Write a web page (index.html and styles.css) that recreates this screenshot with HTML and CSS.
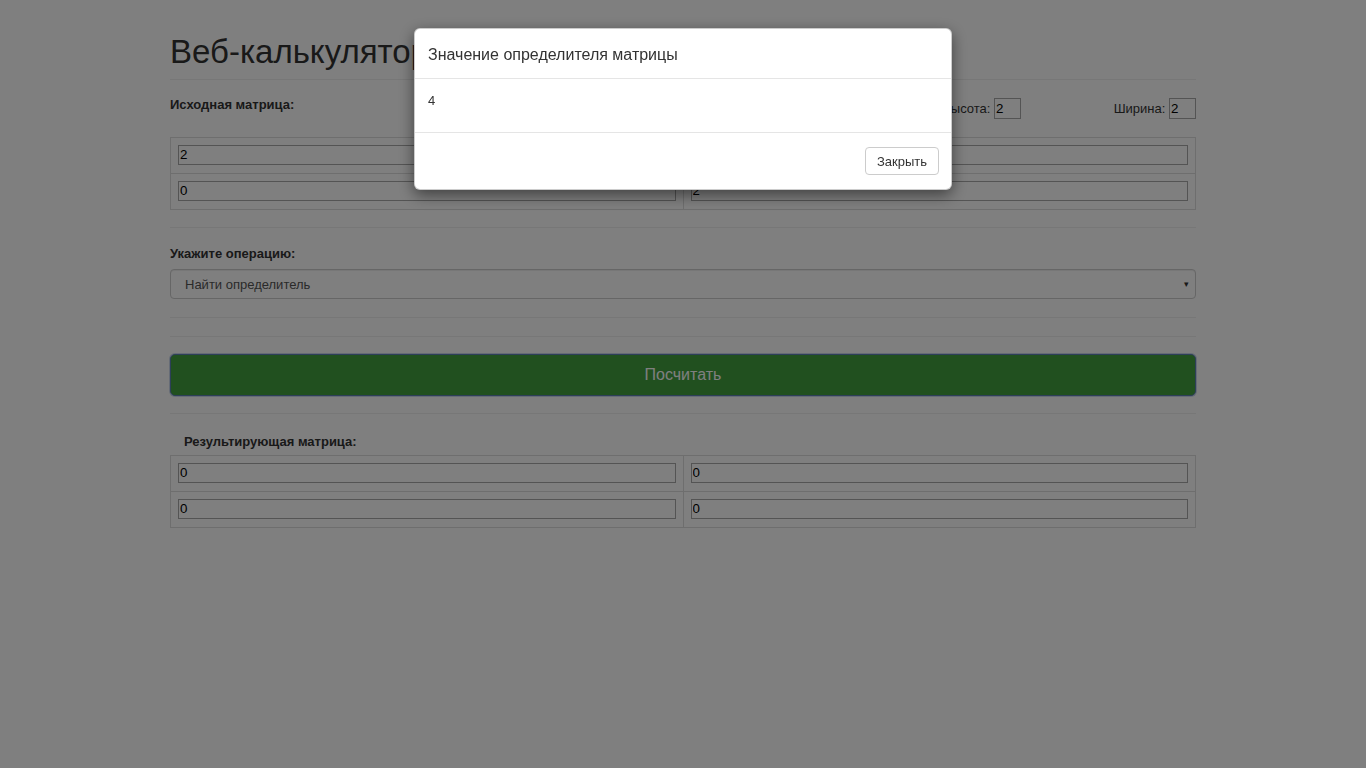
FILE: index.html
```html
<!DOCTYPE html>
<html lang="ru">
<head>
<meta charset="utf-8">
<title>Веб-калькулятор матриц</title>
<link rel="stylesheet" href="styles.css">
</head>
<body>
<div class="container">
  <h1 class="page-title">Веб-калькулятор матриц</h1>

  <div class="size-row">
    <div class="lbl">Исходная матрица:</div>
    <div class="size-field size-h">Высота: <input class="size-input" type="text" value="2"></div>
    <div class="size-field">Ширина: <input class="size-input" type="text" value="2"></div>
  </div>

  <table class="matrix">
    <tr>
      <td><input class="cell" type="text" value="2"></td>
      <td><input class="cell" type="text" value="0"></td>
    </tr>
    <tr>
      <td><input class="cell" type="text" value="0"></td>
      <td><input class="cell" type="text" value="2"></td>
    </tr>
  </table>

  <hr class="sep sep-1">

  <div class="lbl">Укажите операцию:</div>
  <div class="select">
    <span>Найти определитель</span>
    <span class="caret">&#9662;</span>
  </div>

  <hr class="sep sep-2">
  <hr class="sep sep-3">

  <button class="btn-calc" type="button">Посчитать</button>

  <hr class="sep sep-4">

  <div class="lbl lbl-result">Результирующая матрица:</div>
  <table class="matrix">
    <tr>
      <td><input class="cell" type="text" value="0"></td>
      <td><input class="cell" type="text" value="0"></td>
    </tr>
    <tr>
      <td><input class="cell" type="text" value="0"></td>
      <td><input class="cell" type="text" value="0"></td>
    </tr>
  </table>
</div>

<div class="backdrop"></div>
<div class="modal">
  <div class="modal-header">Значение определителя матрицы</div>
  <div class="modal-body">4</div>
  <div class="modal-footer"><button class="btn-close" type="button">Закрыть</button></div>
</div>
</body>
</html>
```

FILE: styles.css
```css
* { box-sizing: border-box; }
html, body { margin: 0; padding: 0; }
body {
  font-family: "Liberation Sans", Arial, sans-serif;
  font-size: 13px;
  color: #333;
  background: #fff;
  height: 768px;
  overflow: hidden;
}
.container {
  width: 1026px;
  margin: 0 auto;
}
.page-title {
  margin: 32px 0 0;
  font-size: 33px;
  font-weight: 500;
  line-height: 40px;
  padding-bottom: 7px;
  border-bottom: 1px solid #eee;
  white-space: nowrap;
}
.lbl {
  font-weight: bold;
  line-height: 20px;
}
.size-row {
  display: grid;
  grid-template-columns: 1fr 171px 171px;
  align-items: start;
  margin-top: 15px;
}
.size-field {
  text-align: right;
  line-height: 21px;
  margin-top: 3px;
}
.size-h { padding-right: 4px; }
.size-input {
  width: 27px;
  height: 21px;
  border: 1px solid #a9a9a9;
  font: 13.33px "Liberation Sans", Arial, sans-serif;
  padding: 0 1px;
  vertical-align: top;
  color: #000;
}
.matrix {
  width: 100%;
  border-collapse: collapse;
  margin-top: 18px;
  table-layout: fixed;
}
.matrix td {
  border: 1px solid #ddd;
  padding: 6px 7px 8px;
  height: 36px;
}
.cell {
  display: block;
  width: 100%;
  height: 20px;
  border: 1px solid #a9a9a9;
  padding: 0 1px;
  font: 13.33px "Liberation Sans", Arial, sans-serif;
  color: #000;
}
.sep {
  border: 0;
  border-top: 1px solid #eee;
  margin: 0;
}
.sep-1 { margin-top: 17px; }
.lbl + .select { margin-top: 5px; }
.sep-1 + .lbl { margin-top: 16px; }
.select {
  height: 30px;
  border: 1px solid #ccc;
  border-radius: 4px;
  display: flex;
  align-items: center;
  justify-content: space-between;
  padding: 0 6px 0 14px;
  color: #555;
  box-shadow: inset 0 1px 1px rgba(0,0,0,.075);
}
.caret { font-size: 9px; color: #333; }
.sep-2 { margin-top: 18px; }
.sep-3 { margin-top: 18px; }
.btn-calc {
  display: block;
  width: 100%;
  height: 42px;
  margin-top: 17px;
  background: #42a03e;
  border: 1px solid #5b7fb0;
  border-radius: 5px;
  color: #fff;
  font: 16px "Liberation Sans", Arial, sans-serif;
  box-shadow: 0 0 0 1px rgba(102,140,200,.35);
}
.sep-4 { margin-top: 17px; }
.lbl-result { margin-top: 18px; padding-left: 14px; }
.lbl-result + .matrix { margin-top: 3px; }

.backdrop {
  position: fixed;
  inset: 0;
  background: rgba(0,0,0,.5);
}
.modal {
  position: fixed;
  top: 28px;
  left: 50%;
  width: 538px;
  margin-left: -269px;
  background: #fff;
  border-radius: 6px;
  box-shadow: 0 5px 15px rgba(0,0,0,.5);
  border: 1px solid rgba(0,0,0,.2);
}
.modal-header {
  padding: 16px 13px 13px;
  font-size: 16px;
  line-height: 20px;
  border-bottom: 1px solid #e5e5e5;
}
.modal-body {
  padding: 12px 13px 21px;
  line-height: 20px;
  font-size: 13px;
  border-bottom: 1px solid #e5e5e5;
}
.modal-footer {
  display: flex;
  justify-content: flex-end;
  padding: 14px 12px 14px;
}
.btn-close {
  height: 28px;
  padding: 0 11px;
  background: #fff;
  border: 1px solid #ccc;
  border-radius: 4px;
  font: 13px "Liberation Sans", Arial, sans-serif;
  color: #333;
}
```
